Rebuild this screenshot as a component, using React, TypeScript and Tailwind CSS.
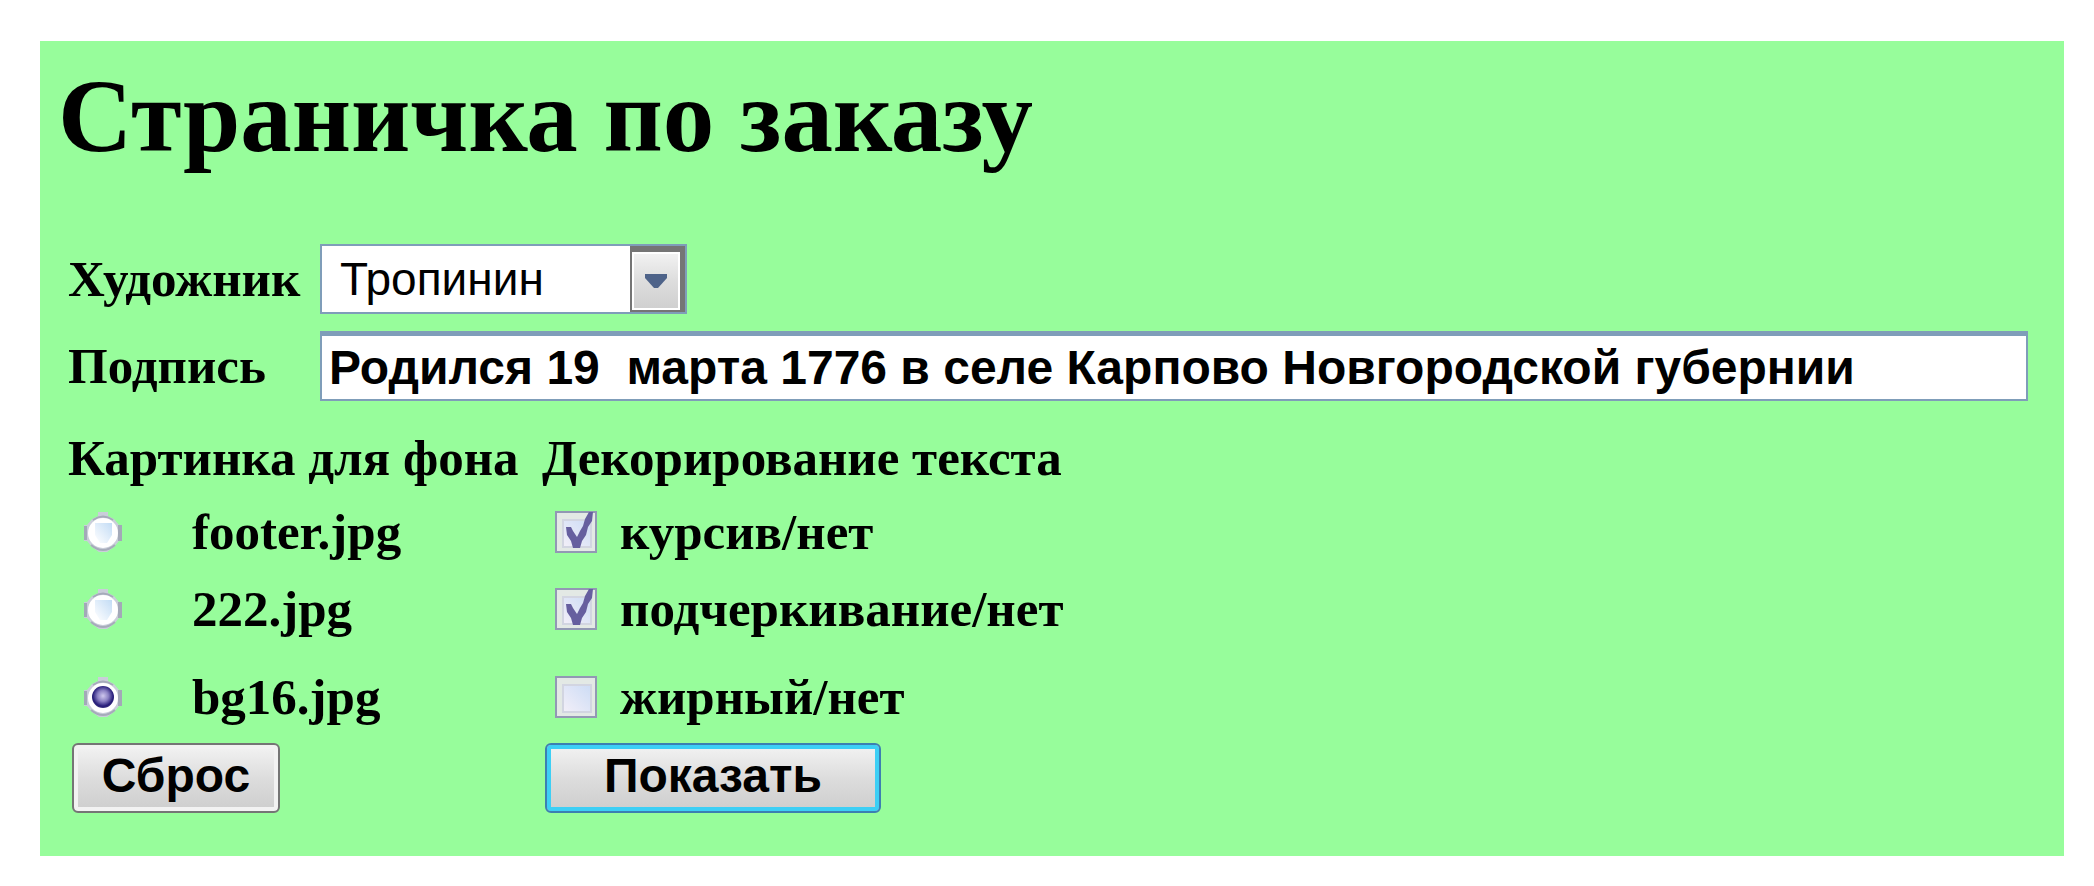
import { useState } from "react";

const backgrounds = [
  { file: "footer.jpg", row: "h-[72px]" },
  { file: "222.jpg", row: "h-[82px]" },
  { file: "bg16.jpg", row: "h-[93px]" },
];

const decorations = [
  { name: "курсив/нет", on: true, row: "h-[72px]" },
  { name: "подчеркивание/нет", on: true, row: "h-[82px]" },
  { name: "жирный/нет", on: false, row: "h-[93px]" },
];

function RadioFace({ checked }: { checked: boolean }) {
  return (
    <svg viewBox="0 0 42 42" className="pointer-events-none col-start-1 row-start-1 size-[42px]" aria-hidden="true">
      <defs>
        <linearGradient id="glass" x1="1" y1="0" x2="0" y2="1">
          <stop offset="0" stopColor="#c3dcf5" />
          <stop offset="1" stopColor="#ffffff" />
        </linearGradient>
        <radialGradient id="dot" cx="0.5" cy="0.45" r="0.55">
          <stop offset="0" stopColor="#cfc8ee" />
          <stop offset="0.45" stopColor="#8c82c4" />
          <stop offset="0.85" stopColor="#251b78" />
          <stop offset="1" stopColor="#3c3480" />
        </radialGradient>
      </defs>
      <path d="M16 1h10v4l6 3 5 6h3v16h-3l-5 6-7 5h-8l-7-5-5-6H2V14h3l5-6 6-3z" fill="#c9ced9" />
      <path d="M2 15h3v14H2zM36 14h4v16h-4z" fill="#a3a9b8" />
      <path d="M11 9q10-7 20 0M9 34q12 10 24 0" fill="none" stroke="#a6abba" strokeWidth="2" />
      <circle cx="21" cy="22" r="15" fill="#fff" />
      {checked ? (
        <circle cx="21" cy="21" r="11" fill="url(#dot)" />
      ) : (
        <path d="M13 12h17v12l-5 8h-7l-5-8z" fill="url(#glass)" />
      )}
    </svg>
  );
}

function CheckFace({ checked }: { checked: boolean }) {
  return (
    <svg viewBox="0 0 42 42" className="pointer-events-none col-start-1 row-start-1 size-[42px]" aria-hidden="true">
      <defs>
        <linearGradient id="pane" x1="1" y1="0" x2="0" y2="1">
          <stop offset="0" stopColor="#ccdcf5" />
          <stop offset="1" stopColor="#f3eff8" />
        </linearGradient>
      </defs>
      <rect x="1" y="1" width="40" height="40" fill="#e3e9e5" stroke="#9298b4" strokeWidth="2" />
      <rect x="8" y="9" width="28" height="27" fill="url(#pane)" stroke="#d2d5e1" strokeWidth="2" />
      {checked && (
        <path d="M11 16h5l2 4 4 6 3-6 3-5 2-7 4-7h4l-1 9-4 6-2 8-4 6-2 7h-7l-2-7-4-6z" fill="#665f9f" />
      )}
    </svg>
  );
}

export default function App() {
  const [background, setBackground] = useState("bg16.jpg");
  const [checks, setChecks] = useState(decorations.map((d) => d.on));

  return (
    <div className="min-h-screen bg-white pt-[41px] pr-[30px] pl-10">
      <main className="bg-[#97fd9b] pr-9 pb-[43px] pl-[28px] font-['Liberation_Serif',serif] text-[51px] leading-[56px] font-bold text-black">
        <h1 className="-ml-[10px] pt-[18px] text-[103px] leading-[114px]">Страничка по заказу</h1>
        <form onSubmit={(e) => e.preventDefault()} className="pt-[71px]">
          <div className="flex h-[70px] items-center">
            <label htmlFor="artist" className="w-[252px] shrink-0">Художник</label>
            <div className="grid h-[70px] w-[367px] border-2 border-[#7f9db9] bg-white">
              <select
                id="artist"
                defaultValue="Тропинин"
                className="col-start-1 row-start-1 w-full appearance-none bg-transparent pl-[18px] font-['Liberation_Sans',sans-serif] text-[46px] leading-[66px] font-normal outline-none"
              >
                <option>Тропинин</option>
              </select>
              <span className="pointer-events-none col-start-1 row-start-1 flex w-[55px] items-center justify-center justify-self-end border-t-[6px] border-r-[5px] border-b-2 border-l-2 border-[#757575] bg-linear-to-b from-[#f3f3f3] from-0% via-[#dddddd] via-50% to-[#cfcfcf] inset-ring-2 inset-ring-white">
                <svg viewBox="0 0 22 14" className="h-[14px] w-[22px]" aria-hidden="true">
                  <path d="M0 0h22v4L13 14H9L0 4z" fill="#4e6389" />
                </svg>
              </span>
            </div>
          </div>
          <div className="mt-[17px] flex h-[70px] items-center">
            <label htmlFor="caption" className="w-[252px] shrink-0">Подпись</label>
            <input
              id="caption"
              type="text"
              defaultValue="Родился 19  марта 1776 в селе Карпово Новгородской губернии"
              className="h-[70px] min-w-0 flex-1 border-2 border-t-[5px] border-[#7f9db9] bg-white pl-[7px] font-['Liberation_Sans',sans-serif] text-[48px] leading-[60px] font-bold outline-none"
            />
          </div>
          <div className="grid grid-cols-[474px_1fr] pt-[29px]">
            <fieldset className="min-w-0">
              <legend className="h-[66px] whitespace-nowrap">Картинка для фона</legend>
              {backgrounds.map(({ file, row }) => (
                <label key={file} className={`flex items-center pl-[14px] ${row}`}>
                  <span className="mr-[68px] grid">
                    <input
                      type="radio"
                      name="background"
                      value={file}
                      checked={background === file}
                      onChange={() => setBackground(file)}
                      className="col-start-1 row-start-1 size-[42px] appearance-none rounded-full"
                    />
                    <RadioFace checked={background === file} />
                  </span>
                  {file}
                </label>
              ))}
              <button
                type="reset"
                className="ml-1 block h-[70px] w-[208px] rounded-md border-2 border-[#757575] bg-linear-to-b from-[#f3f3f3] from-0% via-[#dddddd] via-50% to-[#cdcdcd] pb-1 font-['Liberation_Sans',sans-serif] text-[48px] leading-[60px] inset-ring-4 inset-ring-[#f2f2f2]"
              >
                Сброс
              </button>
            </fieldset>
            <fieldset className="min-w-0">
              <legend className="h-[66px] whitespace-nowrap">Декорирование текста</legend>
              {decorations.map(({ name, row }, i) => (
                <label key={name} className={`flex items-center pl-[13px] ${row}`}>
                  <span className="mr-[23px] grid">
                    <input
                      type="checkbox"
                      checked={checks[i]}
                      onChange={() => setChecks(checks.map((c, j) => (j === i ? !c : c)))}
                      className="col-start-1 row-start-1 size-[42px] appearance-none"
                    />
                    <CheckFace checked={checks[i]} />
                  </span>
                  {name}
                </label>
              ))}
              <button
                type="submit"
                className="ml-[3px] block h-[70px] w-[336px] rounded-md border-2 border-[#3c7fb1] bg-linear-to-b from-[#f3f3f3] from-0% via-[#dddddd] via-50% to-[#cdcdcd] pb-1 font-['Liberation_Sans',sans-serif] text-[48px] leading-[60px] inset-ring-4 inset-ring-[#3dcff5]"
              >
                Показать
              </button>
            </fieldset>
          </div>
        </form>
      </main>
    </div>
  );
}
